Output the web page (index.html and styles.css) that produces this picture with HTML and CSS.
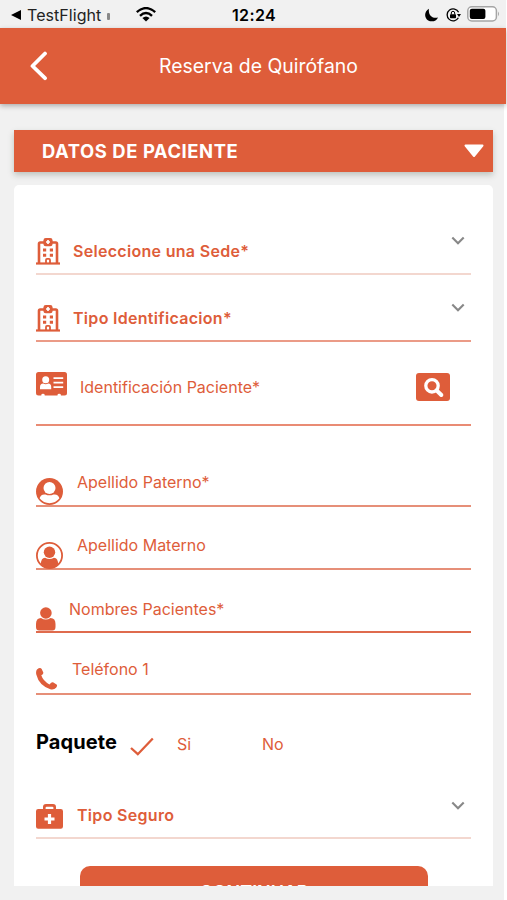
FILE: index.html
```html
<!DOCTYPE html>
<html lang="es">
<head>
<meta charset="utf-8">
<title>Reserva de Quirófano</title>
<link rel="stylesheet" href="styles.css">
</head>
<body>
<svg width="0" height="0" class="defs">
  <symbol id="hospital" viewBox="0 0 24 27">
    <path d="M3 25V5.7Q3 4.5 4.2 4.5H19.8Q21 4.5 21 5.7V25" fill="none" stroke="currentColor" stroke-width="2.6"/>
    <path d="M0 24.4H24V26.6H0z"/>
    <rect x="7.4" y="0" width="9.2" height="8.3" rx="2.4"/>
    <path d="M12 2V6M10 4H14" stroke="#fff" stroke-width="1.7"/>
    <path d="M7 10.5h3.2v3H7zM13.8 10.5h3.2v3h-3.2zM7 15.7h3.2v3H7zM13.8 15.7h3.2v3h-3.2z"/>
    <path d="M10 25.5v-3.6q0-1 1-1h2q1 0 1 1v3.6" fill="none" stroke="currentColor" stroke-width="1.8"/>
  </symbol>
  <symbol id="chevron" viewBox="0 0 14 9"><path d="M1.3 1.5L7 7.2L12.7 1.5" fill="none" stroke="currentColor" stroke-width="2.1"/></symbol>
</svg>
<div class="app">
  <div class="status">
    <svg class="back-app" width="10" height="10" viewBox="0 0 10 10"><path d="M0 5L10 0V10z"/></svg>
    <span class="carrier">TestFlight</span>
    <i class="signal"></i>
    <svg class="wifi" width="20" height="15" viewBox="0 0 20 15"><g fill="none" stroke="#000" stroke-width="2.4"><path d="M.8 5.2Q10-3 19.2 5.2"/><path d="M4 8.9Q10 3.3 16 8.9"/></g><path d="M6.4 11.1Q10 8 13.6 11.1L10 14.6z"/></svg>
    <span class="time">12:24</span>
    <svg class="moon" width="14" height="14" viewBox="0 0 14 14"><path d="M4 .8C-1 3.4-1 10 3.2 12.4C7 14.5 11.4 13 13 9.4C8 11 2.8 7.4 4 .8z"/></svg>
    <svg class="lock" width="15" height="14" viewBox="0 0 15 14"><path d="M12.6 4.3A6 6 0 1 0 12.4 9.8" fill="none" stroke="#000" stroke-width="1.3"/><path d="M11 6.1h4l-2 3z"/><rect x="4" y="6.3" width="6" height="4" rx=".8"/><path d="M5.3 6.5V5a1.7 1.7 0 0 1 3.4 0v1.5" fill="none" stroke="#000"/></svg>
    <svg class="battery" width="33" height="16" viewBox="0 0 33 16"><rect x=".8" y=".8" width="28.6" height="14.2" rx="4" fill="#fff" stroke="#a5a5a5" stroke-width="1.5"/><rect x="2.8" y="2.8" width="15.6" height="10.2" rx="2"/><path d="M31 5.5q2 2.4 0 4.8z" fill="#a5a5a5"/></svg>
  </div>
  <header class="header">
    <svg width="18" height="30" viewBox="0 0 18 30"><path d="M15 2.5L2.5 15L15 27.2" fill="none" stroke="#fff" stroke-width="3.8" stroke-linecap="round" stroke-linejoin="round"/></svg>
    <h1>Reserva de Quirófano</h1>
  </header>
  <main>
    <div class="section">
      <h2>DATOS DE PACIENTE</h2>
      <svg width="20" height="14" viewBox="0 0 20 14"><path d="M1.5 1.5H18.5L10 12z" fill="#fff" stroke="#fff" stroke-width="2" stroke-linejoin="round"/></svg>
    </div>
    <div class="card">
      <div class="field sede">
        <svg class="icon" width="24" height="27"><use href="#hospital"/></svg>
        <b>Seleccione una Sede*</b>
        <svg class="chev" width="14" height="9"><use href="#chevron"/></svg>
      </div>
      <div class="field tipo">
        <svg class="icon" width="24" height="27"><use href="#hospital"/></svg>
        <b>Tipo Identificacion*</b>
        <svg class="chev" width="14" height="9"><use href="#chevron"/></svg>
      </div>
      <div class="field ident">
        <svg class="icon" width="31" height="24" viewBox="0 0 31 24"><rect width="31" height="23.5" rx="2.5"/><g fill="#fff"><circle cx="9.7" cy="7.7" r="3.5"/><path d="M4 17.3V15Q4 11.5 7.2 11.5Q9.7 13 12.2 11.5Q15.2 11.5 15.2 15V17.3z"/><path d="M17.5 5.3h9.7v1.7h-9.7zM17.5 9.8h9.7v1.7h-9.7zM17.5 14.3h9.7v1.7h-9.7z"/><path d="M5.3 24v-1q0-1.3 1.7-1.3T8.7 23v1zM21.5 24v-1q0-1.3 1.7-1.3t1.7 1.3v1z"/></g></svg>
        <span>Identificación Paciente*</span>
        <button class="search" aria-label="Buscar"><svg width="34" height="28" viewBox="0 0 34 28"><circle cx="16" cy="12.8" r="6.2" fill="none" stroke="#fff" stroke-width="3.3"/><path d="M20.7 17.5L25.3 22" stroke="#fff" stroke-width="4" stroke-linecap="round"/></svg></button>
      </div>
      <div class="field paterno">
        <svg class="icon" width="27" height="27" viewBox="0 0 27 27"><circle cx="13.5" cy="13.5" r="13.5"/><g fill="#fff"><circle cx="13.5" cy="10" r="6"/><path d="M3.6 20.3Q4.8 15.7 9.5 16.5Q13.5 18.2 17.5 16.5Q22.2 15.7 23.4 20.3Q19.5 25.2 13.5 25.2T3.6 20.3z"/></g></svg>
        <span>Apellido Paterno*</span>
      </div>
      <div class="field materno">
        <svg class="icon" width="27" height="27" viewBox="0 0 27 27"><circle cx="13.5" cy="13.5" r="12.6" fill="none" stroke="currentColor" stroke-width="1.8"/><circle cx="13.5" cy="10.3" r="5.7"/><path d="M5 22.5Q4.8 15.8 9 15.8Q13.5 18.2 18 15.8Q22.2 15.8 22 22.5Q18.5 26.2 13.5 26.2T5 22.5z"/></svg>
        <span>Apellido Materno</span>
      </div>
      <div class="field nombres">
        <svg class="icon" width="20" height="24" viewBox="0 0 20 24"><circle cx="9.9" cy="6" r="5.8"/><path d="M0 20V17Q0 11 5 11Q9.8 14 14.5 11Q19.5 11 19.5 17V20Q19.5 23.5 16.3 23.5H3.2Q0 23.5 0 20z"/></svg>
        <span>Nombres Pacientes*</span>
      </div>
      <div class="field telefono">
        <svg class="icon" width="22" height="22" viewBox="0 0 22 22"><path d="M1 1.4Q4.2-1 5.7 1L7.3 4.5Q7.7 6 5.3 7.2Q7 12.8 13.5 16.4Q15.5 13.8 17 14.3L20.6 16.5Q21.8 17.5 20.1 19.7Q18 22 14.3 21.2Q3 17.5.3 6.5Q-.4 3 1 1.4z"/></svg>
        <span>Teléfono 1</span>
      </div>
      <div class="package">
        <strong>Paquete</strong>
        <svg width="24" height="20" viewBox="0 0 24 20"><path d="M1 11L7.8 17.2L22.8 1.5" fill="none" stroke="currentColor" stroke-width="2.3"/></svg>
        <span class="yes">Si</span>
        <span class="no">No</span>
      </div>
      <div class="field seguro">
        <svg class="icon" width="27" height="25" viewBox="0 0 27 25"><path d="M2.2 5H7V3Q7 0 10 0H17Q20 0 20 3V5H24.8Q27 5 27 7.2V22.5Q27 24.7 24.8 24.7H2.2Q0 24.7 0 22.5V7.2Q0 5 2.2 5z"/><path d="M9.6 5V3.8Q9.6 2.7 10.7 2.7H16.3Q17.4 2.7 17.4 3.8V5z" fill="#fff"/><path d="M13.5 10V20M8.5 15H18.5" stroke="#fff" stroke-width="3.2"/></svg>
        <b>Tipo Seguro</b>
        <svg class="chev" width="14" height="9"><use href="#chevron"/></svg>
      </div>
      <button class="continue">CONTINUAR</button>
    </div>
  </main>
</div>
</body>
</html>
```
FILE: styles.css
```css
* { box-sizing: border-box; margin: 0; }
body { background: #fff; font-family: Inter, "Liberation Sans", sans-serif; overflow: hidden; }
svg { display: block; flex: none; fill: currentColor; }
.defs { position: absolute; }
.app { height: 900px; display: flex; flex-direction: column; color: #de5d3a; }

.status { height: 28px; flex: none; display: flex; align-items: center; background: #f1f1f1; color: #000; padding: 1px 0 0 11px; margin-right: 1px; }
.carrier { width: 75px; margin-left: 6px; font-size: 16px; line-height: 28px; letter-spacing: .05px; color: #222; white-space: nowrap; }
.signal { width: 3px; height: 7px; margin: 4px 0 0 5px; background: #888; border-radius: 1px; }
.wifi { margin-left: 26px; }
.time { width: 45px; margin-left: 76px; font-size: 16px; font-weight: 600; line-height: 28px; letter-spacing: .35px; white-space: nowrap; }
.moon { margin-left: 148px; }
.lock { margin-left: 7px; }
.battery { margin-left: 6px; margin-top: -1px; }

.header { height: 76px; flex: none; display: flex; align-items: center; background: #de5d3a; color: #fff; padding-left: 30px; margin-right: 1px; box-shadow: 0 2px 5px rgba(0, 0, 0, .28); z-index: 1; }
.header h1 { margin-left: 111px; font-size: 19.4px; font-weight: 400; white-space: nowrap; }

main { flex: 1; min-height: 0; background: #f1f1f1; margin-right: 3px; padding: 26px 11px 0 14px; }
.section { height: 42px; display: flex; align-items: center; justify-content: space-between; background: #de5d3a; color: #fff; padding: 0 9px 0 28px; box-shadow: 0 3px 6px rgba(40, 60, 40, .25); }
.section h2 { font-size: 18.4px; line-height: 22px; font-weight: 650; letter-spacing: .58px; white-space: nowrap; }

.card { height: 701px; margin-top: 13px; background: #fff; border-radius: 5px 5px 0 0; padding: 0 22px; overflow: hidden; }
.field { display: flex; align-items: flex-start; border-bottom: 2px solid #e68f78; font-size: 16px; line-height: 20px; white-space: nowrap; }
.field span { letter-spacing: 0; }
.field b { font-weight: 600; letter-spacing: .3px; }
.chev { color: #888; margin: -2px 6px 0 auto; }

.sede { height: 90px; padding-top: 53px; border-color: #f3d7cf; }
.sede b { margin: 3px 0 0 13px; }
.tipo { height: 67px; padding-top: 30px; border-color: #eb9b87; }
.tipo b { margin: 3px 0 0 13px; }
.ident { height: 84px; padding-top: 30px; border-color: #e98b74; }
.ident span { margin: 5px 0 0 13px; }
.search { width: 34px; height: 28px; padding: 0; border: 0; border-radius: 3px; background: #de5d3a; margin: 1px 21px 0 auto; }
.paterno { height: 81px; padding-top: 46px; }
.paterno .icon { margin-top: 6px; }
.paterno span, .materno span { margin-left: 14px; }
.materno { height: 63px; padding-top: 28px; }
.materno .icon { margin-top: 7px; }
.nombres { height: 63px; padding-top: 29px; border-color: #df6b4d; }
.nombres .icon { margin-top: 8px; }
.nombres span { margin-left: 13px; }
.telefono { height: 62px; padding-top: 26px; }
.telefono .icon { margin-top: 9px; }
.telefono span { margin-left: 14px; }
.package { height: 96px; display: flex; align-items: flex-start; padding-top: 35px; font-size: 16px; line-height: 24px; }
.package strong { width: 82px; color: #000; font-size: 20px; font-weight: 650; letter-spacing: .1px; }
.package svg { margin: 7px 0 0 12px; }
.yes { width: 85px; margin: 2px 0 0 23px; }
.no { margin-top: 2px; }
.seguro { height: 48px; padding-top: 13px; border-color: #f3d7cf; }
.seguro b { margin: 1px 0 0 14px; }
.seguro .chev { margin-top: -3px; }
.continue { display: flex; justify-content: center; align-items: flex-start; width: 348px; height: 56px; margin: 27px 0 0 44px; padding: 0; border: 0; border-radius: 10px; background: #de5d3a; color: #fff; font: 600 18px/54px Inter, "Liberation Sans", sans-serif; }
```
